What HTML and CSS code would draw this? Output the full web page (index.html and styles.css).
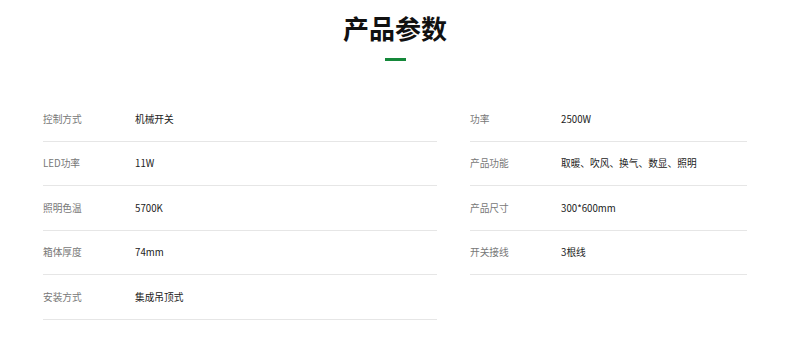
FILE: index.html
```html
<!DOCTYPE html>
<html lang="zh-CN">
<head>
<meta charset="utf-8">
<title>产品参数</title>
<link rel="stylesheet" href="styles.css">
</head>
<body>
<section class="params">
  <h2 class="title">产品参数</h2>
  <div class="bar"></div>
  <div class="cols">
    <div class="col col-left">
      <div class="row"><span class="label">控制方式</span><span class="value">机械开关</span></div>
      <div class="row"><span class="label">LED功率</span><span class="value">11W</span></div>
      <div class="row"><span class="label">照明色温</span><span class="value">5700K</span></div>
      <div class="row"><span class="label">箱体厚度</span><span class="value">74mm</span></div>
      <div class="row"><span class="label">安装方式</span><span class="value">集成吊顶式</span></div>
    </div>
    <div class="col col-right">
      <div class="row"><span class="label">功率</span><span class="value">2500W</span></div>
      <div class="row"><span class="label">产品功能</span><span class="value">取暖、吹风、换气、数显、照明</span></div>
      <div class="row"><span class="label">产品尺寸</span><span class="value">300*600mm</span></div>
      <div class="row"><span class="label">开关接线</span><span class="value">3根线</span></div>
    </div>
  </div>
</section>
</body>
</html>
```
FILE: styles.css
```css
html, body {
  margin: 0;
  padding: 0;
  background: #fff;
}
body {
  font-family: "Noto Sans CJK SC", "Noto Sans", sans-serif;
}
.params {
  display: flex;
  flex-direction: column;
  align-items: center;
  padding-top: 13px;
}
.title {
  margin: 0;
  font-size: 26px;
  line-height: 30px;
  font-weight: 700;
  color: #111;
}
.bar {
  width: 21px;
  height: 3px;
  margin-top: 15px;
  background: #15883a;
}
.cols {
  display: grid;
  grid-template-columns: 394px 277px;
  column-gap: 33px;
  margin-top: 36px;
  align-items: start;
}
.row {
  display: flex;
  align-items: center;
  height: 43.5px;
  border-bottom: 1px solid #e6e6e6;
  font-size: 9.7px;
}
.label {
  width: 92px;
  flex: none;
  color: #777;
}
.col-right .label {
  width: 91px;
}
.value {
  color: #222;
}
```
